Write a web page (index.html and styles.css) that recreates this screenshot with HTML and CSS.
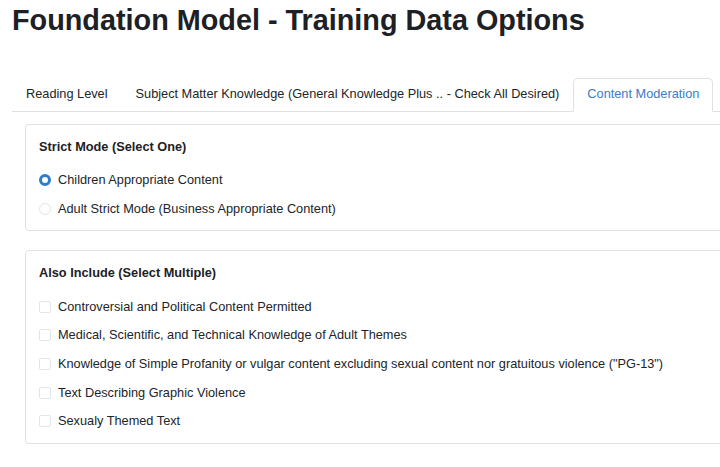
FILE: index.html
```html
<!DOCTYPE html>
<html lang="en">
<head>
<meta charset="utf-8">
<title>Foundation Model - Training Data Options</title>
<link rel="stylesheet" href="styles.css">
</head>
<body>
<div class="page">
  <h1 class="title">Foundation Model - Training Data Options</h1>
  <ul class="tabs">
    <li class="tab">Reading Level</li>
    <li class="tab">Subject Matter Knowledge (General Knowledge Plus .. - Check All Desired)</li>
    <li class="tab active">Content Moderation</li>
  </ul>
  <div class="tab-content">
    <section class="card">
      <h2 class="card-title">Strict Mode (Select One)</h2>
      <label class="option"><span class="radio checked"></span>Children Appropriate Content</label>
      <label class="option"><span class="radio"></span>Adult Strict Mode (Business Appropriate Content)</label>
    </section>
    <section class="card">
      <h2 class="card-title">Also Include (Select Multiple)</h2>
      <label class="option"><span class="check"></span>Controversial and Political Content Permitted</label>
      <label class="option"><span class="check"></span>Medical, Scientific, and Technical Knowledge of Adult Themes</label>
      <label class="option"><span class="check"></span>Knowledge of Simple Profanity or vulgar content excluding sexual content nor gratuitous violence ("PG-13")</label>
      <label class="option"><span class="check"></span>Text Describing Graphic Violence</label>
      <label class="option"><span class="check"></span>Sexualy Themed Text</label>
    </section>
  </div>
</div>
</body>
</html>
```
FILE: styles.css
```css
html, body {
  margin: 0;
  padding: 0;
  overflow: hidden;
  background: #fff;
}
body {
  font-family: "Liberation Sans", Arial, sans-serif;
  color: #212529;
  font-size: 12.75px;
}
.page {
  width: 820px;
  padding: 0 0 0 12px;
}
.title {
  margin: 0;
  padding-top: 3px;
  font-size: 28.8px;
  line-height: 35px;
  font-weight: bold;
  color: #1d2024;
}
.tabs {
  list-style: none;
  margin: 40px 0 0 0;
  padding: 0;
  display: flex;
  border-bottom: 1px solid #dee2e6;
}
.tab {
  padding: 7px 14px 11px;
  line-height: 15px;
  border-top: 1px solid transparent;
  margin-bottom: -1px;
}
.tab.active {
  color: #3b7dc4;
  border: 1px solid #dee2e6;
  border-bottom: 1px solid #fff;
  border-radius: 5px 5px 0 0;
  background: #fff;
  padding: 7px 13px 10px;
}
.tab-content {
  padding: 12px 0 0 13px;
  display: flex;
  flex-direction: column;
  gap: 19px;
}
.card {
  border: 1px solid #dee2e6;
  border-radius: 4px;
  padding: 14px 13px 7px;
}
.card-title {
  margin: 0 0 11px;
  font-size: 12.75px;
  line-height: 16px;
  font-weight: bold;
  color: #1d2024;
}
.option {
  display: flex;
  align-items: center;
  height: 28.7px;
  line-height: 16px;
}
.radio {
  width: 12px;
  height: 12px;
  box-sizing: border-box;
  border: 1px solid #e1e5ea;
  border-radius: 50%;
  margin-right: 7px;
  flex: none;
}
.radio.checked {
  border: 3.5px solid #2f7bd0;
}
.check {
  width: 12px;
  height: 12px;
  box-sizing: border-box;
  border: 1px solid #e1e5ea;
  border-radius: 2px;
  margin-right: 7px;
  flex: none;
}
```
